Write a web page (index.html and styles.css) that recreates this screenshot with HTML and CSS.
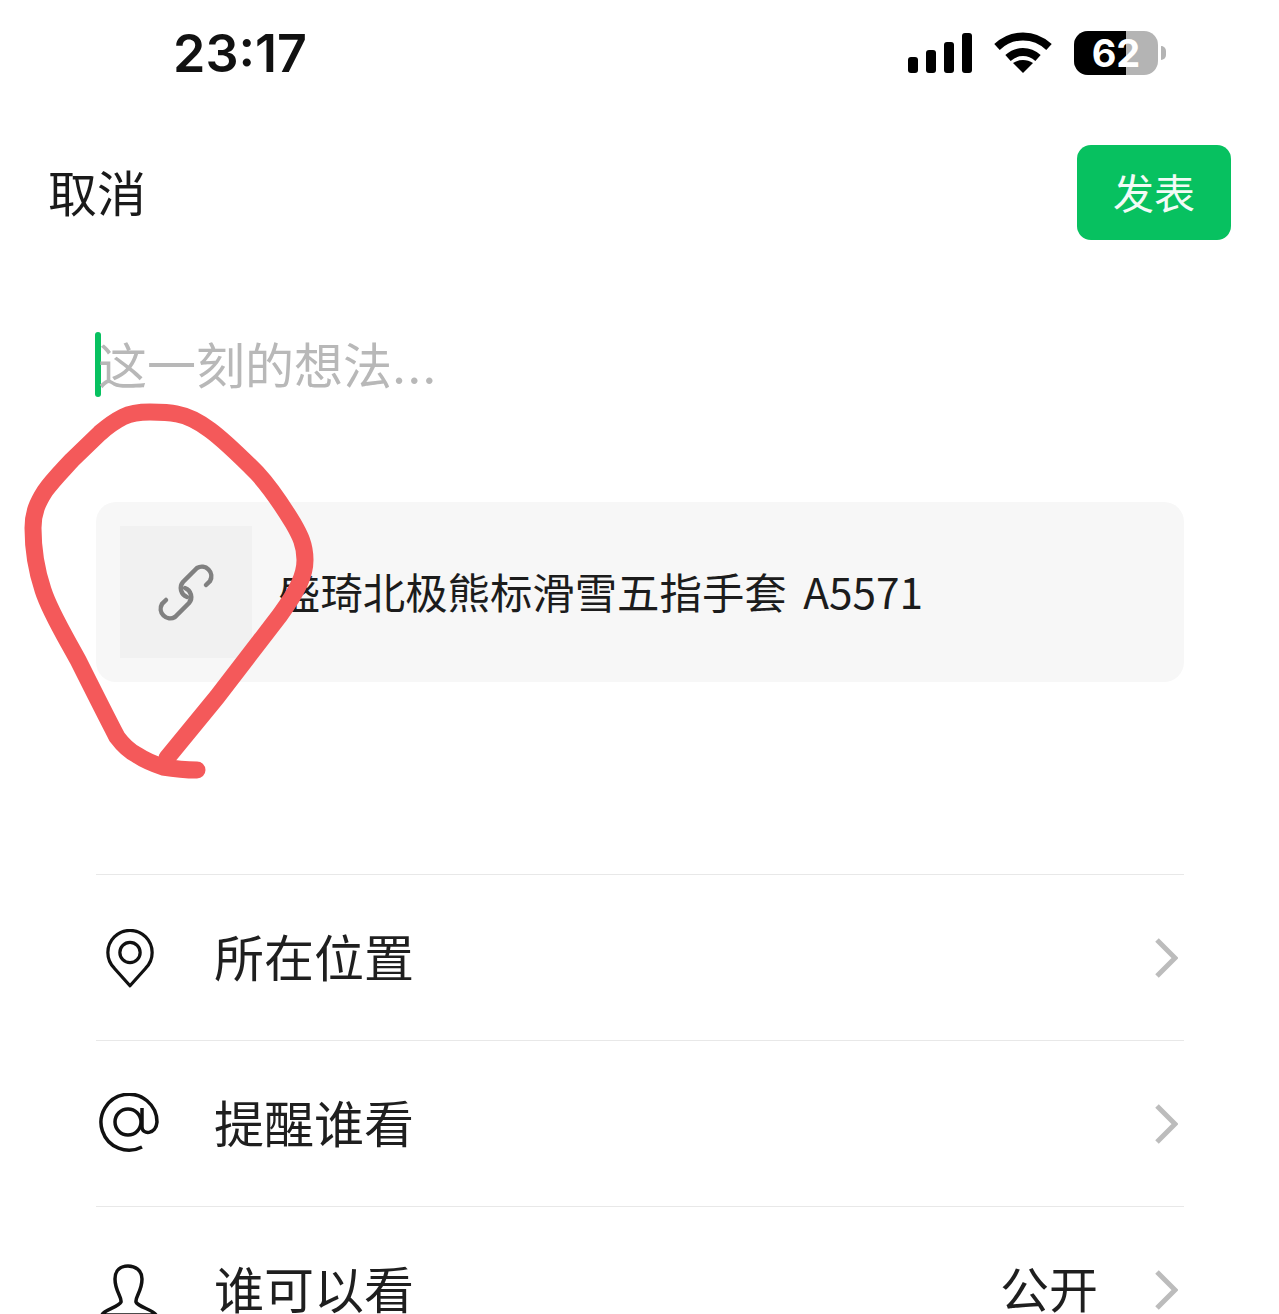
FILE: index.html
```html
<!DOCTYPE html>
<html lang="zh-CN">
<head>
  <meta charset="UTF-8">
  <title>发表朋友圈</title>
  <meta name="viewport" content="width=device-width, initial-scale=1.0">
  <link rel="stylesheet" href="styles.css">
</head>
<body>
  <div class="status-bar">
    <div class="time">23:17</div>
    <div class="status-icons">
      <div class="signal">
        <span class="bar bar1"></span>
        <span class="bar bar2"></span>
        <span class="bar bar3"></span>
        <span class="bar bar4"></span>
      </div>
      <svg class="wifi" viewBox="0 0 58 42">
        <path class="wifi-arc" d="M3 15 C18 1 40 1 55 15"/>
        <path class="wifi-arc" d="M14 26 C23 18 35 18 44 26"/>
        <path class="wifi-dot" d="M19 31 C25 27 33 27 39 31 L29 41 Z"/>
      </svg>
      <div class="battery">
        <div class="battery-body">
          <div class="battery-level"></div>
          <span class="battery-text">62</span>
        </div>
        <div class="battery-tip"></div>
      </div>
    </div>
  </div>

  <div class="top-bar">
    <div class="cancel">取消</div>
    <div class="publish">发表</div>
  </div>

  <div class="compose">
    <span class="caret"></span>
    <span class="placeholder">这一刻的想法<span class="dots">...</span></span>
  </div>

  <div class="link-card">
    <div class="thumb">
      <svg class="link-icon" viewBox="0 0 60 60">
        <path d="M50 23 L54 19 A9.500 9.500 0 0 0 41 6 L27 20 A9.500 9.500 0 0 0 31 35"/>
        <path d="M10 38 L6 42 A9.500 9.500 0 0 0 19 55 L33 41 A9.500 9.500 0 0 0 29 26"/>
      </svg>
    </div>
    <div class="link-title">盛琦北极熊标滑雪五指手套 A5571</div>
  </div>

  <div class="menu">
    <div class="menu-row">
      <div class="menu-icon">
        <svg class="pin" viewBox="0 0 52 64">
          <path d="M26 61 L9 42 A24 24 0 1 1 43 42 Z"/>
          <circle cx="26" cy="25" r="11"/>
        </svg>
      </div>
      <div class="menu-label">所在位置</div>
      <svg class="chevron" viewBox="0 0 24 42"><path d="M3 3 L21 21 L3 39"/></svg>
    </div>
    <div class="menu-row">
      <div class="menu-icon">
        <svg class="at" viewBox="0 0 62 62">
          <circle cx="29" cy="29" r="13"/>
          <path d="M43 15 L43 34 C43 42 57 42 58 29 A28 28 0 1 0 43 54"/>
        </svg>
      </div>
      <div class="menu-label">提醒谁看</div>
      <svg class="chevron" viewBox="0 0 24 42"><path d="M3 3 L21 21 L3 39"/></svg>
    </div>
    <div class="menu-row">
      <div class="menu-icon">
        <svg class="person" viewBox="0 0 60 56">
          <path d="M2 51 C3 46 19 43 21 38 C22 33 15 27 15 15 C15 6 21 2 28 2 C35 2 42 6 42 15 C42 27 35 33 36 38 C38 43 54 46 56 51 Z"/>
        </svg>
      </div>
      <div class="menu-label">谁可以看</div>
      <div class="menu-value">公开</div>
      <svg class="chevron" viewBox="0 0 24 42"><path d="M3 3 L21 21 L3 39"/></svg>
    </div>
  </div>

  <!-- hand drawn circle on top of the screenshot -->
  <svg class="scribble" viewBox="0 0 340 800">
    <path d="M167 758 L217 697 L280 615 C298 590 305 575 305 560 C305 545 300 535 293 523 C282 505 270 487 257 473 C240 456 225 441 210 430 C198 421 188 416 177 414 C168 412 159 412 150 412 C140 412 131 413 123 417 C115 421 108 426 100 433 L72 460 C60 473 52 481 45 491 C38 502 33 512 33 528 C33 550 37 572 43 590 C50 612 65 636 78 660 C88 680 104 712 117 737 C123 745 129 751 137 755 C146 761 154 764 163 767 C175 769 186 770 197 770"/>
  </svg>
</body>
</html>
```

FILE: styles.css
```css
html, body {
  height: 1314px;
  overflow: hidden;
}
body {
  margin: 0;
  position: relative;
  background-color: #fff;
  color: #1a1a1a;
  font-family: "Noto Sans CJK SC", "Noto Sans", sans-serif;
}
svg {
  display: block;
  fill: none;
}

.status-bar {
  height: 106px;
  display: flex;
  justify-content: space-between;
  align-items: center;
  padding: 0 113px 0 173px;
}
.time {
  font-family: Inter, "Liberation Sans", sans-serif;
  font-size: 52px;
  font-weight: 600;
  color: #111;
}
.status-icons {
  display: flex;
  align-items: center;
}
.signal {
  display: flex;
  align-items: flex-end;
  gap: 8px;
  height: 40px;
  margin-right: 22px;
}
.bar {
  width: 10px;
  background-color: #000;
  border-radius: 3px;
}
.bar1 { height: 16px; }
.bar2 { height: 23px; }
.bar3 { height: 31px; }
.bar4 { height: 40px; }
.wifi {
  width: 58px;
  height: 42px;
  margin-right: 22px;
}
.wifi-arc {
  stroke: #000;
  stroke-width: 8;
}
.wifi-dot {
  fill: #000;
}
.battery {
  display: flex;
  align-items: center;
}
.battery-body {
  width: 84px;
  height: 44px;
  position: relative;
  display: flex;
  justify-content: center;
  align-items: center;
  background-color: #b4b4b4;
  border-radius: 14px;
  overflow: hidden;
}
.battery-level {
  position: absolute;
  left: 0;
  top: 0;
  bottom: 0;
  width: 52px;
  background-color: #000;
}
.battery-text {
  position: relative;
  font-family: Inter, "Liberation Sans", sans-serif;
  font-size: 38px;
  font-weight: 700;
  color: #fff;
}
.battery-tip {
  width: 5px;
  height: 14px;
  margin-left: 3px;
  background-color: #b4b4b4;
  border-radius: 0 7px 7px 0;
}

.top-bar {
  height: 95px;
  margin-top: 39px;
  display: flex;
  justify-content: space-between;
  align-items: center;
  padding: 0 48px 0 48px;
}
.cancel {
  font-size: 49px;
  line-height: 60px;
  margin-bottom: 4px;
}
.publish {
  width: 154px;
  height: 91px;
  padding-bottom: 4px;
  display: flex;
  justify-content: center;
  align-items: center;
  background-color: #07c160;
  border-radius: 14px;
  color: #f2fbf6;
  font-size: 41px;
}

.compose {
  height: 65px;
  margin-top: 92px;
  padding-left: 95px;
  display: flex;
  align-items: center;
}
.caret {
  width: 6px;
  height: 65px;
  margin-right: -3px;
  background-color: #07c160;
  border-radius: 3px;
}
.placeholder {
  font-size: 49px;
  line-height: 65px;
  color: #b8b8b8;
}
.dots {
  font-family: Inter, "Liberation Sans", sans-serif;
  letter-spacing: 1px;
}

.link-card {
  height: 180px;
  margin: 105px 95px 0 96px;
  padding-left: 24px;
  display: flex;
  align-items: center;
  background-color: #f7f7f7;
  border-radius: 20px;
}
.thumb {
  width: 132px;
  height: 132px;
  display: flex;
  justify-content: center;
  align-items: center;
  background-color: #f1f1f1;
}
.link-icon {
  width: 60px;
  height: 60px;
  stroke: #808080;
  stroke-width: 4.500;
  stroke-linecap: round;
}
.link-title {
  margin: 0 0 4px 26px;
  font-size: 42.400px;
  word-spacing: 7px;
  color: #1c1c1c;
}

.menu {
  margin: 192px 95px 0 96px;
}
.menu-row {
  height: 166px;
  display: flex;
  align-items: center;
  border-top: 1px solid #e8e8e8;
  box-sizing: border-box;
}
.menu-icon {
  width: 68px;
  display: flex;
  justify-content: center;
  margin-right: 50px;
}
.pin {
  width: 48px;
  height: 60px;
  margin-top: 2px;
  stroke: #111;
  stroke-width: 3.500;
  stroke-linejoin: round;
}
.at {
  width: 62px;
  height: 62px;
  stroke: #111;
  stroke-width: 3.500;
}
.person {
  width: 60px;
  height: 56px;
  margin-top: 4px;
  stroke: #111;
  stroke-width: 3.500;
}
.menu-label {
  flex: 1;
  margin-bottom: 6px;
  font-size: 50px;
  line-height: 60px;
  color: #1f1f1f;
}
.menu-value {
  margin: 0 56px 6px 0;
  font-size: 49px;
  line-height: 60px;
  color: #1f1f1f;
}
.chevron {
  width: 24px;
  height: 42px;
  margin-right: 6px;
  stroke: #bcbcbc;
  stroke-width: 5;
}

/* sits over the card, not part of the layout */
.scribble {
  position: absolute;
  left: 0;
  top: 0;
  width: 340px;
  height: 800px;
}
.scribble path {
  stroke: #f4595a;
  stroke-width: 17;
  stroke-linecap: round;
  stroke-linejoin: round;
}
```
